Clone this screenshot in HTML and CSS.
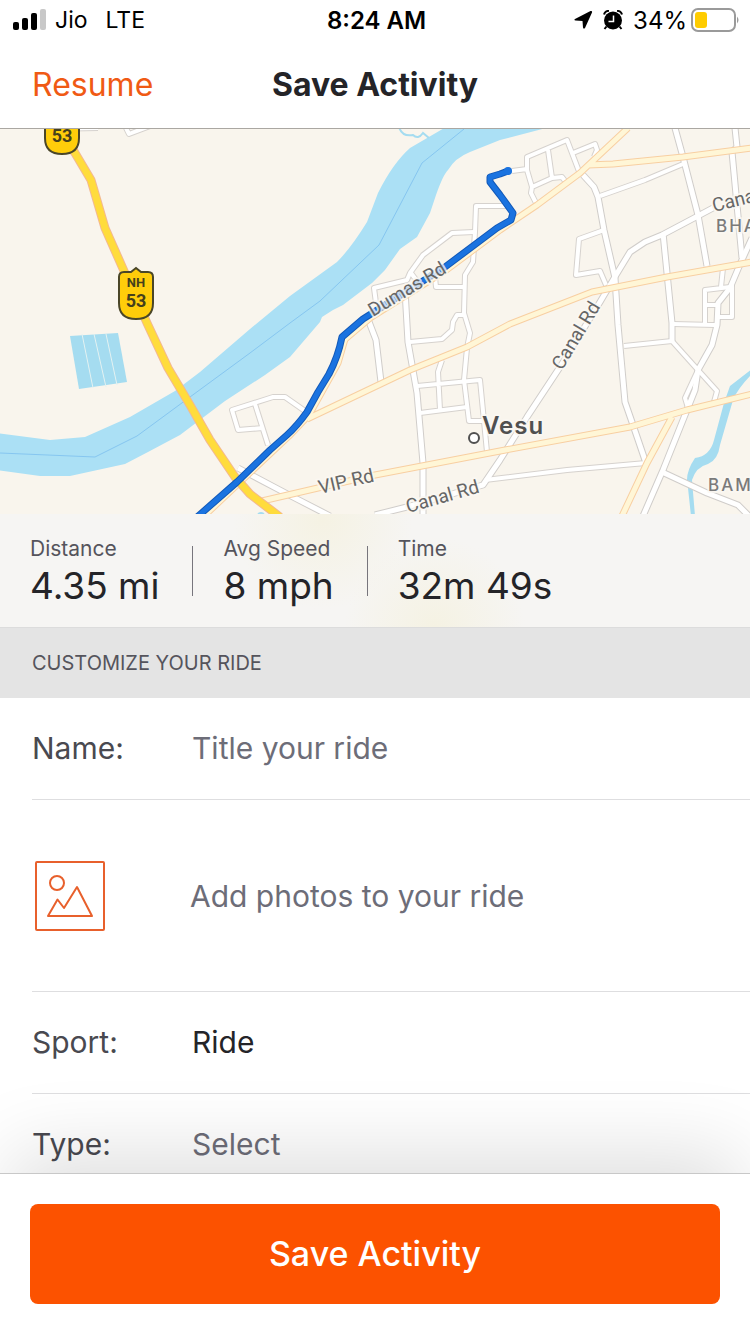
FILE: index.html
```html
<!DOCTYPE html>
<html lang="en">
<head>
  <meta charset="UTF-8">
  <meta name="viewport" content="width=device-width, initial-scale=1">
  <title>Save Activity</title>
  <link rel="stylesheet" href="styles.css">
</head>

<body>
  <div class="app">
    <!-- Status bar -->
    <div class="status-bar">
      <div class="status-left">
        <svg class="signal" width="34" height="22" viewBox="0 0 34 22">
          <rect x="0" y="13" width="6" height="8" rx="2"/>
          <rect x="9" y="9" width="6" height="12" rx="2"/>
          <rect x="18" y="4" width="6" height="17" rx="2"/>
          <rect x="27" y="0" width="6" height="21" rx="2" fill="#c8c8c8"/>
        </svg>
        <span class="carrier">Jio</span>
        <span>LTE</span>
      </div>
      <div class="status-time">8:24 AM</div>
      <div class="status-right">
        <svg width="19" height="20" viewBox="0 0 19 20">
          <path d="M1 9 L16.500 1 Q18.500 0.500 18 2.500 L11 18 Q9.500 19.500 9 17.500 L8.500 11 L1.500 10.500 Q-0.500 10 1 9z"/>
        </svg>
        <svg class="alarm" width="20" height="20" viewBox="0 0 20 20">
          <circle cx="10" cy="10.500" r="9"/>
          <path d="M1 4.500 Q2 1 6 .8M19 4.500 Q18 1 14 .8M3.500 16.500 L1.500 19M16.500 16.500 L18.500 19" fill="none" stroke="#000" stroke-width="2"/>
          <path d="M10.500 5.500 V11.500 H5.500" fill="none" stroke="#fff" stroke-width="1.500"/>
        </svg>
        <span>34%</span>
        <svg class="battery" width="49" height="24" viewBox="0 0 49 24">
          <rect x="1" y="1" width="43" height="22" rx="6" fill="none" stroke="#9a9a9a" stroke-width="2"/>
          <rect x="4" y="4" width="12" height="16" rx="3" fill="#ffcc00"/>
          <path d="M46 8.500 Q49 12 46 15.500z" fill="#9a9a9a"/>
        </svg>
      </div>
    </div>

    <header class="nav">
      <button class="resume-btn" type="button">Resume</button>
      <h1>Save Activity</h1>
    </header>

    <main class="content">
      <!-- Route map -->
      <svg class="map" viewBox="0 129 750 385" role="img" aria-label="Route map">
        <defs>
          <g id="streets">
            <path d="M46 129 L98 128M126 128 L129 134 L150 126"/>
            <path d="M512 171 L527 169M537 205 L531 193 L532 187 L527 170 V157 L567 140 L580 174M548 150 L552 178M532 187 L552 178 L562 177 L565 181M573 153 L595 144 L597 150 L594 157"/>
            <path d="M600 196 L645 180 L683 164M604 230 L579 239 L576 275 L600 271 L606 285"/>
            <path d="M705 323 V290 L730 287M706 305 H718M723 268 L721 287M732 283 V317 H718M673 324 L715 325M624 346 L672 341L698 370 L717 391 L714 402M698 370 L685 398 L688 408"/>
            <path d="M508 206 H476 L475 232 L473 262 L465 275 L464 313 L470 333 L467 348 L464 380 L469 421 H483"/>
            <path d="M474 232 L452 233 L423 255 L410 273 L407 280 L374 288 L376 303M411 273 L417 281M435 277 L436 287 H464M410 342 L442 339 L452 330 L453 322 L457 315 H464"/>
            <path d="M417 386 L480 380 L487 452M442 360 L438 372 L440 410M420 413 L467 407"/>
            <path d="M305 411 L285 397 H273 L232 410 L238 430 L263 428M255 404 L268 445"/>
            <path d="M485 480 L567 470 L646 463"/>
          </g>
          <g id="avenues">
            <path d="M583 175 L594 187 L598 197 L604 230 L615 278 L618 325 L625 402 L633 425 L646 463"/>
            <path d="M675 128 L683 157 L698 215 L707 266M735 128 L737 147 L732 152 L742 258M663 233 L672 323 V341"/>
            <path d="M713 208 L662 235 L645 242 L630 252 L613 280 L600 302 L560 367 L527 417 L500 460 L483 485 L407 507 L375 515"/>
            <path d="M752 238 L741 262 L730 288 L718 303 L717 325 L712 345 L698 370 L695 390 L687 410 L663 470 L643 516"/>
            <path d="M662 472 L707 493 L738 505 L750 517"/>
            <path d="M405 290 L408 342 L417 393 L423 463 V516M366 314 L376 340 L381 382M238 468 L293 497 L330 516"/>
          </g>
          <g id="arterials">
            <path d="M307 419 L410 370 L467 347 L510 324 L592 292 L667 277 L752 262"/>
            <path d="M344 340 L370 318 L445 271 L500 230 L537 205 L580 173 L628 128M588 165 L613 164 L683 157 L752 148"/>
            <path d="M262 501 L318 488 L375 475 L500 451 L630 427 L687 410 L752 394M672 417 L647 463 L622 516"/>
            <path d="M204 516 L238 484 L289 436 L309 415 L338 363 L345 339"/>
          </g>
          <path id="highway" d="M60 129 L75 153 L91 180 L105 228 L124 271 L147 323 L168 368 L190 405 L210 440 L235 477 L250 494 L280 517"/>
          <path id="ride" d="M196 518 L237 482 L270 450 L287 435 Q297 426 307 412 L318 392 L329 374 Q338 357 342 337 L363 319 L445 267 L497 228 L511 220 L513 213 L500 195 L490 182 V177 L500 174 L508 171"/>
          <path id="shield" d="M-12 -22 H-5 L0 -26 L5 -22 H12 Q17 -22 17 -17 V9 Q17 25 0 25 Q-17 25 -17 9 V-17 Q-17 -22 -12 -22z"/>
        </defs>

        <rect y="129" width="750" height="385" fill="#f9f5ed"/>

        <!-- Water -->
        <path class="river" d="M-4 433 L50 440 L85 437 L130 417 L175 391 L200 372 L250 329 L290 296 L337 262 Q351 248 367 222 L378 193 Q393 163 410 148 L446 127 H550 L500 140 L470 152 Q455 158 448 170 Q443 175 436 195 L430 213 L417 237 L400 249 L385 270 L372 283 L343 305 L333 310 L322 317 L320 322 L290 357 L265 375 L225 401 L180 435 L148 452 L125 464 L70 476 H40 L-4 470z"/>
        <path class="river-line" d="M0 453 L95 457 L137 436 L190 397 L250 353 L290 323 L320 301 L379 245 L422 163 L464 129"/>
        <path class="creek" d="M399 127 Q402 137 413 135 Q418 140 423 133 L429 138"/>
        <path class="stream" d="M752 369 L730 386 L724 403 L714 440 Q710 456 695 458 Q684 474 688 488 L691 516 H695 L692 480 Q696 467 708 464 Q718 460 720 445 L733 400 Q738 388 752 374z"/>
        <path class="pond" d="M70 336 L118 333 L127 382 L79 389z"/>
        <path class="pond-line" d="M82 334 L93 388M94 334 L106 387M106 334 L117 385"/>
        <circle cx="261" cy="516" r="4" fill="#a5dcf0"/>

        <!-- Roads: casing first, then fill -->
        <use href="#streets" class="road street-case"/>
        <use href="#avenues" class="road avenue-case"/>
        <use href="#streets" class="road street"/>
        <use href="#avenues" class="road avenue"/>
        <use href="#arterials" class="road arterial-case"/>
        <use href="#arterials" class="road arterial"/>
        <use href="#highway" class="road highway-case"/>
        <use href="#highway" class="road highway"/>

        <!-- Recorded ride -->
        <use href="#ride" class="road route-edge"/>
        <use href="#ride" class="road route"/>
        <circle cx="508" cy="171" r="4" fill="#1a73e0"/>

        <!-- Highway shields -->
        <g class="shield">
          <use href="#shield" x="62" y="129"/>
          <text x="62" y="142" font-size="18">53</text>
          <use href="#shield" x="136" y="294"/>
          <text x="136" y="287" font-size="13">NH</text>
          <text x="136" y="307" font-size="18">53</text>
        </g>

        <!-- Place names -->
        <g class="road-label">
          <text transform="translate(373 317) rotate(-31)">Dumas Rd</text>
          <text transform="translate(320 494) rotate(-13)">VIP Rd</text>
          <text transform="translate(408 513) rotate(-16)">Canal Rd</text>
          <text transform="translate(562 371) rotate(-59)">Canal Rd</text>
          <text transform="translate(714 212) rotate(-14)">Cana</text>
        </g>
        <g class="area-label">
          <text x="716" y="232">BHA</text>
          <text x="708" y="491">BAM</text>
        </g>
        <circle cx="474" cy="438" r="5" fill="#fff" stroke="#505050" stroke-width="2"/>
        <text class="town-label" x="482" y="434">Vesu</text>
      </svg>

      <dl class="stats">
        <div class="stat">
          <dt>Distance</dt>
          <dd>4.35 mi</dd>
        </div>
        <div class="stat">
          <dt>Avg Speed</dt>
          <dd>8 mph</dd>
        </div>
        <div class="stat">
          <dt>Time</dt>
          <dd>32m 49s</dd>
        </div>
      </dl>

      <h2>CUSTOMIZE YOUR RIDE</h2>

      <form id="ride-form">
        <div class="row">
          <label for="name">Name:</label>
          <input type="text" id="name" placeholder="Title your ride">
        </div>
        <button class="row photo-row" type="button">
          <svg width="72" height="72" viewBox="0 0 72 72" fill="none" stroke="#e8602c" stroke-width="2" stroke-linejoin="round">
            <rect x="2" y="2" width="68" height="68" rx="1"/>
            <circle cx="23" cy="23" r="7"/>
            <path d="M14 56 L23.500 39.500 L30 48 L43 27 L58 56z"/>
          </svg>
          <span>Add photos to your ride</span>
        </button>
        <div class="row">
          <label for="sport">Sport:</label>
          <select id="sport" class="chosen">
            <option>Ride</option>
            <option>Run</option>
          </select>
        </div>
        <div class="row">
          <label for="type">Type:</label>
          <select id="type">
            <option>Select</option>
            <option>Commute</option>
            <option>Workout</option>
          </select>
        </div>
      </form>
    </main>

    <footer class="footer">
      <button class="save-btn" type="submit" form="ride-form">Save Activity</button>
    </footer>
  </div>
</body>
</html>
```

FILE: styles.css
```css
* {
  box-sizing: border-box;
}
body {
  margin: 0;
  font-family: Inter, "Liberation Sans", sans-serif;
  color: #242428;
  background-color: white;
}
button, input, select {
  font: inherit;
  color: inherit;
  border: none;
  background: none;
  padding: 0;
  margin: 0;
}
button {
  cursor: pointer;
}
.app {
  display: flex;
  flex-direction: column;
  height: 100vh;
  overflow: hidden;
}

/* Status bar */
.status-bar {
  display: grid;
  grid-template-columns: 1fr auto 1fr;
  align-items: center;
  height: 40px;
  padding: 0 10px 0 13px;
  font-size: 24px;
  color: black;
}
.status-left, .status-right {
  display: flex;
  align-items: center;
}
.status-left {
  gap: 8px;
  font-size: 23px;
}
.carrier {
  margin-right: 10px;
}
.status-time {
  font-weight: 600;
}
.status-right {
  justify-content: flex-end;
  gap: 10px;
}
.battery {
  margin-left: -6px;
}

/* Navigation */
.nav {
  display: grid;
  grid-template-columns: 1fr auto 1fr;
  align-items: center;
  height: 89px;
  padding: 0 32px;
  border-bottom: 1px solid #aaa7a2;
}
.resume-btn {
  justify-self: start;
  font-size: 32px;
  color: #f05a14;
}
h1 {
  margin: 0;
  font-size: 32px;
  font-weight: 700;
}
.content {
  flex: 1;
  min-height: 0;
  overflow-y: auto;
  scrollbar-width: none;
}

/* Map */
.map {
  display: block;
  width: 100%;
}
.river {
  fill: #abe0f5;
}
.river-line {
  fill: none;
  stroke: #86c6f0;
  stroke-width: 1;
}
.creek {
  fill: none;
  stroke: #a5dcf0;
  stroke-width: 2;
}
.stream, .pond {
  fill: #a5dcf0;
}
.pond-line {
  stroke: #e4f2f2;
  stroke-width: 1;
}
.road {
  fill: none;
  stroke-linejoin: round;
}
.street-case {
  stroke: #d6d2ce;
  stroke-width: 6;
}
.street {
  stroke: white;
  stroke-width: 4;
}
.avenue-case {
  stroke: #d0cdca;
  stroke-width: 7;
}
.avenue {
  stroke: white;
  stroke-width: 5;
}
.arterial-case {
  stroke: #f8cfa2;
  stroke-width: 7;
}
.arterial {
  stroke: #fff6d6;
  stroke-width: 5;
}
.highway-case {
  stroke: #f3b892;
  stroke-width: 9;
}
.highway {
  stroke: #ffdc3c;
  stroke-width: 7;
}
.route-edge, .route {
  stroke-linecap: round;
}
.route-edge {
  stroke: #1259b8;
  stroke-width: 7;
}
.route {
  stroke: #1a73e0;
  stroke-width: 5;
}
.shield use {
  fill: #ffcd0a;
  stroke: #4a4628;
  stroke-width: 2;
}
.shield text {
  font-family: Roboto, sans-serif;
  font-weight: 700;
  fill: #45401c;
  text-anchor: middle;
}
.road-label, .area-label, .town-label {
  fill: #666;
  stroke: #fbf8f3;
  stroke-opacity: 0.8;
  stroke-width: 4;
  stroke-linejoin: round;
  paint-order: stroke;
}
.road-label {
  font-family: Roboto, sans-serif;
  font-size: 19px;
}
.area-label {
  font-size: 17px;
  font-weight: 500;
  letter-spacing: 2px;
  fill: #7a7a7a;
}
.town-label {
  font-size: 24px;
  font-weight: 600;
  letter-spacing: 1px;
  fill: #505050;
}

/* Stats */
.stats {
  display: flex;
  margin: 0;
  padding: 21px 30px 17px;
  background:
    radial-gradient(circle at 43% 5%, #f5f2e3, transparent 90px),
    radial-gradient(circle at 58% 100%, #f5f2e3, transparent 90px),
    #f6f5f3;
  border-bottom: 1px solid #dcdcdc;
}
.stat {
  position: relative;
  padding-right: 33px;
}
.stat + .stat {
  padding-left: 31px;
}
.stat + .stat::before {
  content: "";
  position: absolute;
  left: 0;
  top: 11px;
  width: 1px;
  height: 50px;
  background-color: #77757c;
}
dt {
  font-size: 21px;
  line-height: 27px;
  color: #55545c;
}
dd {
  margin: 0;
  font-size: 37px;
  line-height: 48px;
}
h2 {
  margin: 0;
  padding: 21px 32px;
  font-size: 20px;
  font-weight: 400;
  line-height: 28px;
  color: #55545c;
  background-color: #e4e4e4;
}

/* Form */
.row {
  display: flex;
  align-items: center;
  margin-left: 32px;
  padding: 30px 32px 30px 0;
  border-bottom: 1px solid #dedee0;
  font-size: 30px;
  line-height: 41px;
  color: #6d6d78;
}
.row label {
  flex: none;
  width: 160px;
  color: #494950;
}
.row input, .row select {
  flex: 1;
  min-width: 0;
  height: 41px;
  appearance: none;
  outline: none;
}
.row input::placeholder {
  color: #6d6d78;
  opacity: 1;
}
.row .chosen {
  color: #242428;
}
.photo-row {
  width: calc(100% - 32px);
  gap: 84px;
  padding: 60px 32px 59px 2px;
}

/* Footer */
.footer {
  position: relative;
  padding: 30px;
  background-color: white;
  border-top: 1px solid #c8c8c8;
  box-shadow: 0 -30px 80px -10px rgba(0, 0, 0, 0.13);
}
.save-btn {
  display: block;
  width: 100%;
  padding: 30px;
  border-radius: 8px;
  background-color: #fc5200;
  color: white;
  font-size: 34px;
  font-weight: 500;
  line-height: 40px;
}
```
